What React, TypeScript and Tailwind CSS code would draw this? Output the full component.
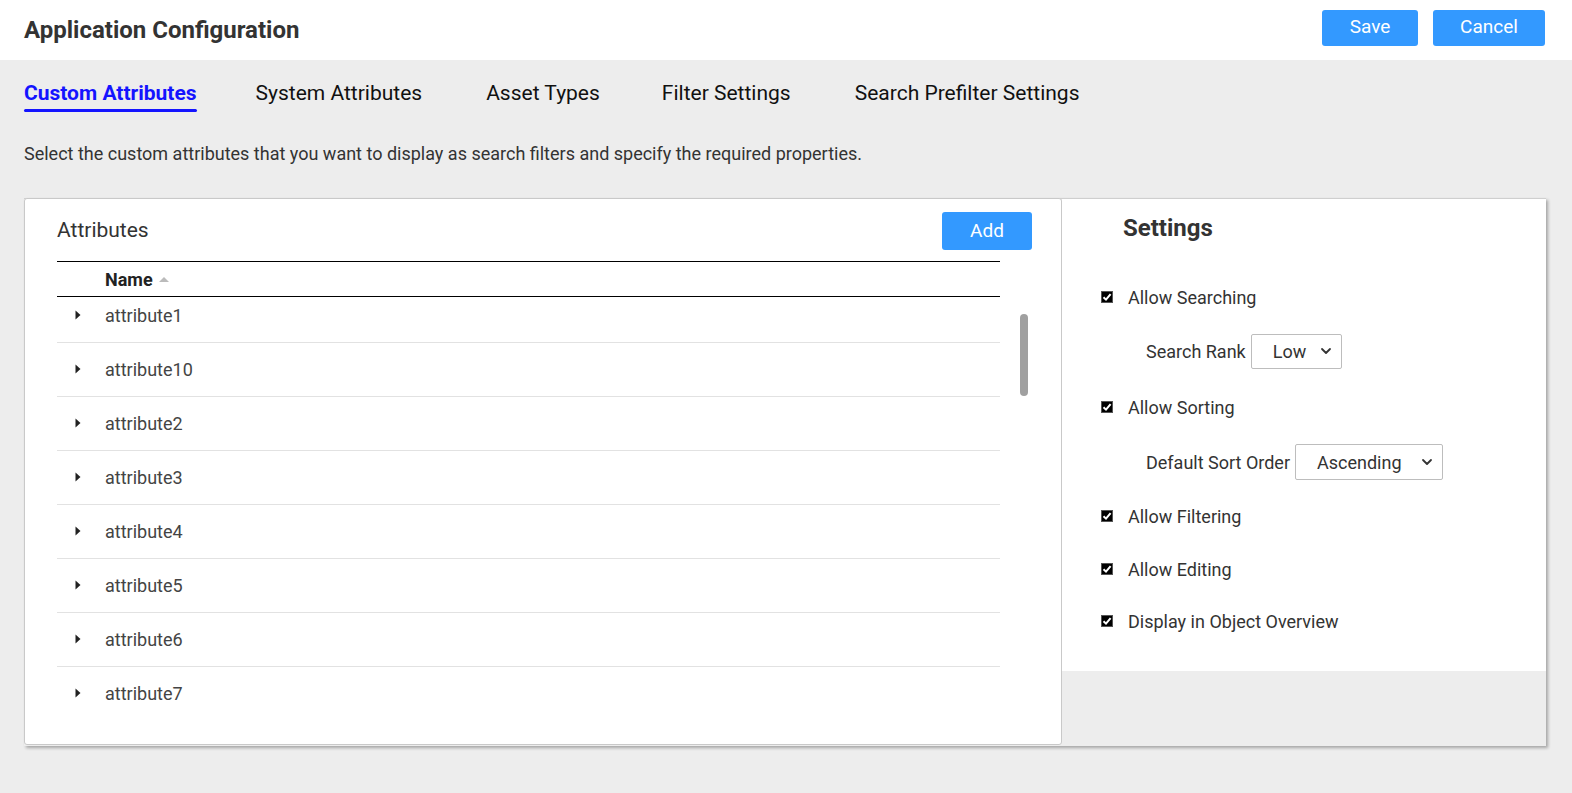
import React from "react";

const tabs = [
  { label: "Custom Attributes", ml: "" },
  { label: "System Attributes", ml: "ml-[59px]" },
  { label: "Asset Types", ml: "ml-[64px]" },
  { label: "Filter Settings", ml: "ml-[62px]" },
  { label: "Search Prefilter Settings", ml: "ml-[64px]" },
];
const rows = ["attribute1", "attribute10", "attribute2", "attribute3", "attribute4", "attribute5", "attribute6", "attribute7"];

function Check() {
  return (
    <span className="w-[12px] h-[12px] bg-black flex items-center justify-center shrink-0 border border-[#555]">
      <svg width="10" height="10" viewBox="0 0 10 10">
        <path d="M1.5 5.2 L4 7.6 L8.6 2.2" stroke="#fff" strokeWidth="2" fill="none" />
      </svg>
    </span>
  );
}

function Chevron() {
  return (
    <svg width="14" height="14" viewBox="0 0 14 14" className="shrink-0">
      <path d="M3 5 L7 9 L11 5" stroke="#333" strokeWidth="1.8" fill="none" strokeLinecap="round" strokeLinejoin="round" />
    </svg>
  );
}

function CheckRow({ label, h }: { label: string; h: string }) {
  return (
    <div className={`flex items-center pl-[39px] ${h}`}>
      <Check />
      <span className="ml-[15px] text-[18px] text-[#333]">{label}</span>
    </div>
  );
}

export default function App() {
  return (
    <div className="w-[1572px] h-[793px] bg-[#ededed] font-['Roboto',sans-serif] text-[#333] overflow-hidden">
      <header className="h-[60px] bg-white flex items-center justify-between pl-[24px] pr-[27px]">
        <h1 className="text-[24px] font-bold text-[#333]">Application Configuration</h1>
        <div className="flex gap-[15px] -mt-[5px]">
          <button className="w-[96px] h-[36px] bg-[#3399ff] text-white text-[19px] rounded-[3px]">Save</button>
          <button className="w-[112px] h-[36px] bg-[#3399ff] text-white text-[19px] rounded-[3px]">Cancel</button>
        </div>
      </header>

      <nav className="flex px-[24px] pt-[20px] items-start">
        {tabs.map((t, i) => (
          <div key={t.label} className={`flex flex-col ${t.ml}`}>
            <span className={`text-[21px] leading-[26px] ${i === 0 ? "font-bold text-[#1414ff]" : "text-[#111]"}`}>{t.label}</span>
            {i === 0 && <span className="h-[3px] bg-[#1414ff] rounded-full mt-[3px]" />}
          </div>
        ))}
      </nav>

      <p className="px-[24px] mt-[31px] text-[18px] leading-[22px] text-[#333]">
        Select the custom attributes that you want to display as search filters and specify the required properties.
      </p>

      <div className="mx-[24px] mt-[33px] w-[1522px] h-[548px] flex border-t border-[#cfcfcf] shadow-[2px_2px_3px_rgba(0,0,0,0.3)]">
        <section className="w-[1038px] h-full bg-white border border-[#c9c9c9] rounded-[3px] flex flex-col -mt-px">
          <div className="flex items-center justify-between pl-[32px] pr-[29px] pt-[13px]">
            <h2 className="text-[21px] text-[#333]">Attributes</h2>
            <button className="w-[90px] h-[38px] bg-[#3399ff] text-white text-[19px] rounded-[3px]">Add</button>
          </div>
          <div className="flex pl-[32px] mt-[11px]">
            <div className="w-[943px]">
              <div className="h-[36px] border-t border-b border-black flex items-center pl-[48px]">
                <span className="text-[18px] font-bold text-[#222]">Name</span>
                <svg width="12" height="8" viewBox="0 0 12 8" className="ml-[5px]">
                  <path d="M1 7 L6 2 L11 7 Z" fill="#bbb" />
                </svg>
              </div>
              <div className="h-[422px] overflow-hidden">
                <div className="-mt-[8px]">
                  {rows.map((r) => (
                    <div key={r} className="h-[54px] border-b border-[#e2e2e2] flex items-center pl-[18px]">
                      <svg width="6" height="10" viewBox="0 0 6 10" className="-mt-[2px]">
                        <path d="M0.5 0.5 L5.5 5 L0.5 9.5 Z" fill="#222" />
                      </svg>
                      <span className="ml-[24px] text-[18px] text-[#444]">{r}</span>
                    </div>
                  ))}
                </div>
              </div>
            </div>
            <div className="ml-[20px] pt-[53px]">
              <div className="w-[8px] h-[82px] bg-[#a0a0a0] rounded-full" />
            </div>
          </div>
        </section>

        <aside className="flex-1 flex flex-col">
          <div className="h-[472px] bg-white">
            <div className="h-[72px] pl-[61px] pt-[15px]">
              <h2 className="text-[24px] leading-[28px] font-bold text-[#333]">Settings</h2>
            </div>
            <CheckRow label="Allow Searching" h="h-[52px]" />
            <div className="h-[56px] flex items-center pl-[84px]">
              <span className="text-[18px] text-[#333] mr-[5px]">Search Rank</span>
              <div className="w-[91px] h-[35px] border border-[#bdbdbd] rounded-[2px] flex items-center justify-between pl-[21px] pr-[8px]">
                <span className="text-[18px] text-[#333]">Low</span>
                <Chevron />
              </div>
            </div>
            <CheckRow label="Allow Sorting" h="h-[56px]" />
            <div className="h-[54px] flex items-center pl-[84px]">
              <span className="text-[18px] text-[#333] mr-[5px]">Default Sort Order</span>
              <div className="w-[148px] h-[36px] border border-[#bdbdbd] rounded-[2px] flex items-center justify-between pl-[21px] pr-[8px]">
                <span className="text-[18px] text-[#333]">Ascending</span>
                <Chevron />
              </div>
            </div>
            <CheckRow label="Allow Filtering" h="h-[54px]" />
            <CheckRow label="Allow Editing" h="h-[52px]" />
            <CheckRow label="Display in Object Overview" h="h-[52px]" />
          </div>
          <div className="flex-1 bg-[#ededed]" />
        </aside>
      </div>
    </div>
  );
}
